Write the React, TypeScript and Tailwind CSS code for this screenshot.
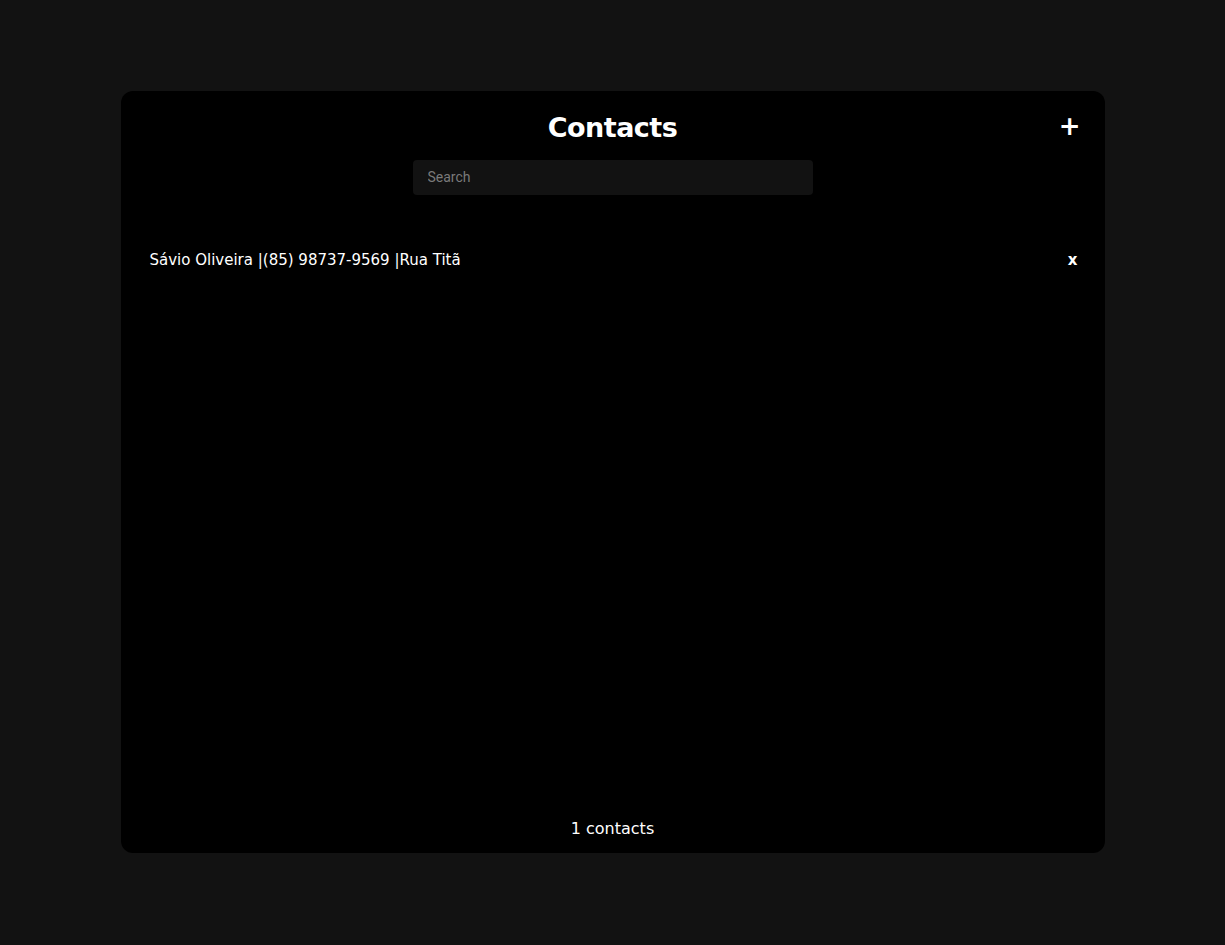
import React from "react";

export default function App() {
  return (
    <div className="min-h-[945px] w-full bg-[#121212] flex justify-center pt-[91px]" style={{ fontFamily: '"DejaVu Sans", sans-serif' }}>
      <div className="w-[984px] h-[762px] bg-black rounded-[12px] flex flex-col relative">
        <div className="flex flex-col items-center pt-[19px]">
          <h1 className="text-white font-bold text-[27px] leading-[36px] tracking-[-0.5px]">Contacts</h1>
          <div className="mt-[14px] w-[400px] h-[35px] bg-[#121212] rounded-[4px] flex items-center px-[15px]">
            <input
              className="w-full bg-transparent outline-none text-[14px] text-[#ccc] placeholder:text-[#7a7a7a]"
              style={{ fontFamily: 'Roboto, sans-serif' }}
              placeholder="Search"
            />
          </div>
        </div>
        <button className="absolute top-[22px] right-[24px] text-white text-[26px] leading-none font-bold">
          +
        </button>
        <div className="mt-[53px] pl-[29px] pr-[27px] flex items-center justify-between h-[24px]">
          <span className="text-white text-[15px]">Sávio Oliveira |(85) 98737-9569 |Rua Titã</span>
          <span className="text-white text-[15px] font-bold">x</span>
        </div>
        <div className="flex-1" />
        <div className="text-center text-white text-[16px] pb-[12px]">1 contacts</div>
      </div>
    </div>
  );
}
